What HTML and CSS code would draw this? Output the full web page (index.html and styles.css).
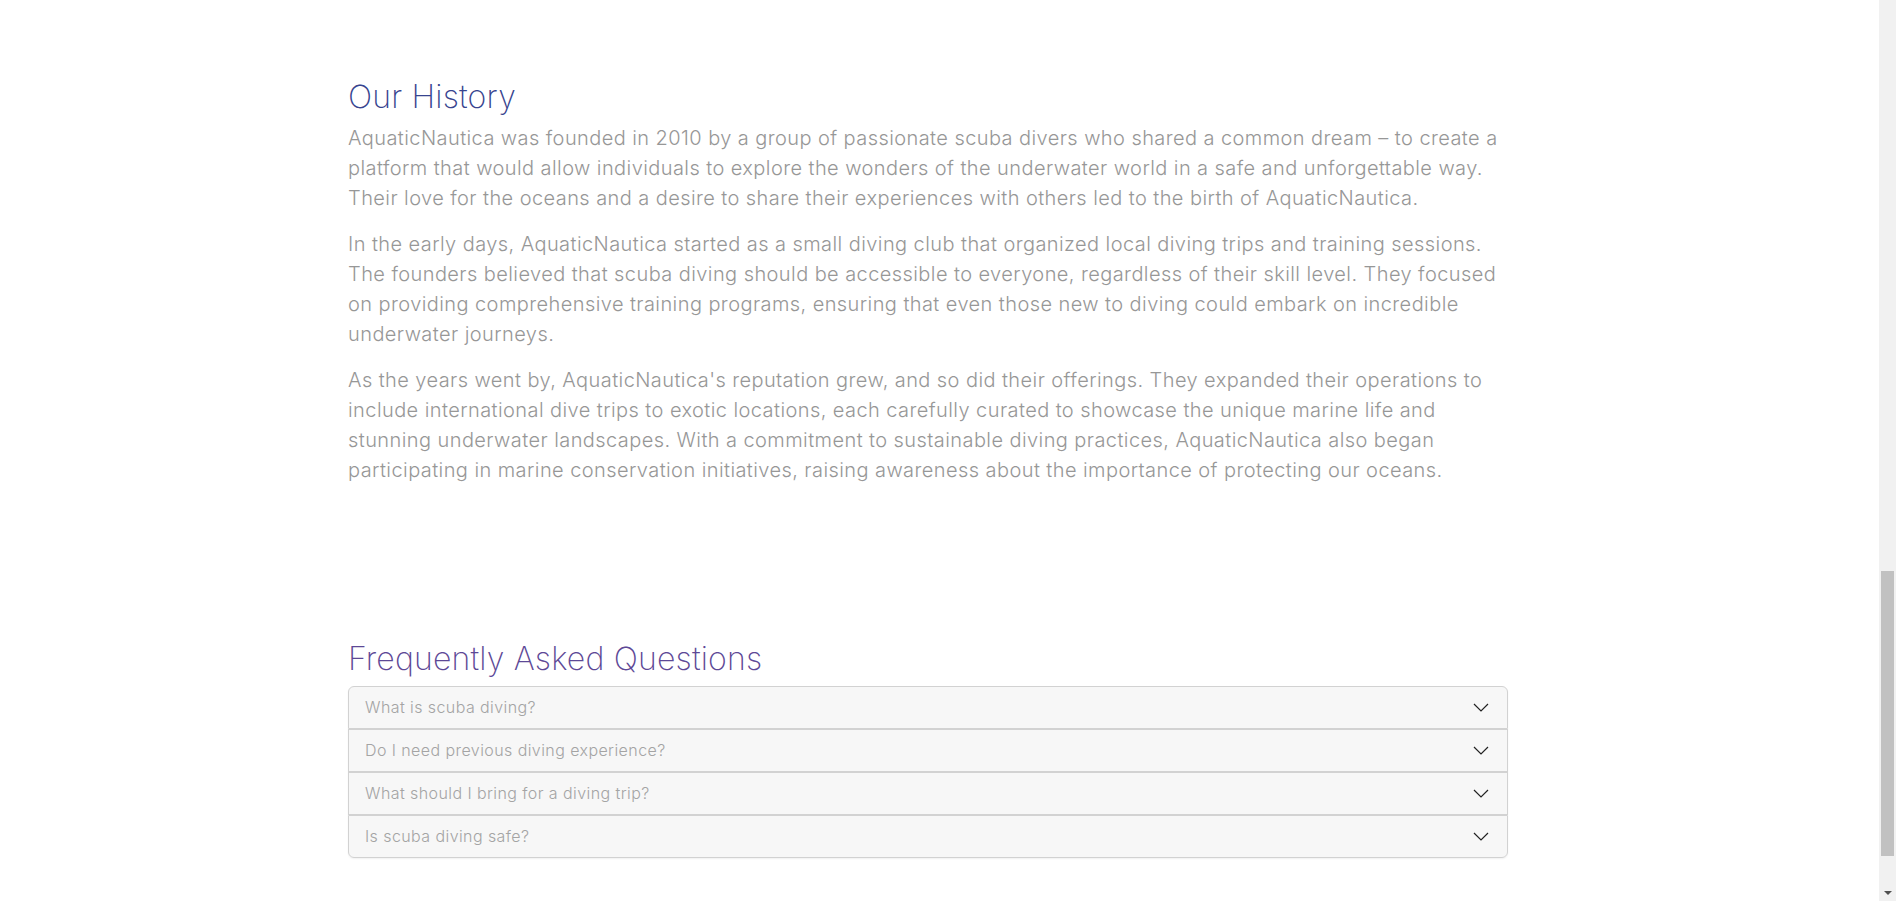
FILE: index.html
```html
<!DOCTYPE html>
<html lang="en">
<head>
<meta charset="utf-8">
<title>AquaticNautica – About</title>
<link rel="stylesheet" href="styles.css">
</head>
<body>
<div class="viewport">
  <main class="page">
    <section class="history">
      <h2 class="title title-history">Our History</h2>
      <p class="text">AquaticNautica was founded in 2010 by a group of passionate scuba divers who shared a common dream – to create a platform that would allow individuals to explore the wonders of the underwater world in a safe and unforgettable way. Their love for the oceans and a desire to share their experiences with others led to the birth of AquaticNautica.</p>
      <p class="text">In the early days, AquaticNautica started as a small diving club that organized local diving trips and training sessions. The founders believed that scuba diving should be accessible to everyone, regardless of their skill level. They focused on providing comprehensive training programs, ensuring that even those new to diving could embark on incredible underwater journeys.</p>
      <p class="text">As the years went by, AquaticNautica's reputation grew, and so did their offerings. They expanded their operations to include international dive trips to exotic locations, each carefully curated to showcase the unique marine life and stunning underwater landscapes. With a commitment to sustainable diving practices, AquaticNautica also began participating in marine conservation initiatives, raising awareness about the importance of protecting our oceans.</p>
    </section>
    <section class="faq">
      <h2 class="title title-faq">Frequently Asked Questions</h2>
      <div class="accordion">
        <div class="acc-item">
          <button class="acc-btn" type="button"><span>What is scuba diving?</span>
            <svg class="chev" width="16" height="9" viewBox="0 0 16 9"><polyline points="1,1 8,8 15,1" fill="none" stroke="#222" stroke-width="1.2"/></svg>
          </button>
        </div>
        <div class="acc-item">
          <button class="acc-btn" type="button"><span>Do I need previous diving experience?</span>
            <svg class="chev" width="16" height="9" viewBox="0 0 16 9"><polyline points="1,1 8,8 15,1" fill="none" stroke="#222" stroke-width="1.2"/></svg>
          </button>
        </div>
        <div class="acc-item">
          <button class="acc-btn" type="button"><span>What should I bring for a diving trip?</span>
            <svg class="chev" width="16" height="9" viewBox="0 0 16 9"><polyline points="1,1 8,8 15,1" fill="none" stroke="#222" stroke-width="1.2"/></svg>
          </button>
        </div>
        <div class="acc-item">
          <button class="acc-btn" type="button"><span>Is scuba diving safe?</span>
            <svg class="chev" width="16" height="9" viewBox="0 0 16 9"><polyline points="1,1 8,8 15,1" fill="none" stroke="#222" stroke-width="1.2"/></svg>
          </button>
        </div>
      </div>
    </section>
  </main>
</div>
<div class="scrollbar" aria-hidden="true">
  <div class="sb-button"></div>
  <div class="sb-thumb"></div>
  <div class="sb-button sb-down"><span class="sb-arrow"></span></div>
</div>
</body>
</html>
```

FILE: styles.css
```css
html, body { height: 100%; }
body {
  margin: 0;
  display: flex;
  height: 100vh;
  overflow: hidden;
  background: #fff;
  font-family: "Inter", "Open Sans", sans-serif;
  font-weight: 300;
  color: #979797;
}
.viewport {
  flex: 1;
  min-width: 0;
}
.page {
  width: 1160px;
  margin-left: 348px;
}
.history { padding-top: 78px; }
.faq { padding-top: 139px; }
.title {
  margin: 0 0 7px;
  font-size: 32px;
  line-height: 1.2;
  font-weight: 200;
  letter-spacing: 0.18px;
}
.title-history { color: #37448f; }
.title-faq { color: #5d4896; }
.text {
  margin: 0 0 16px;
  font-size: 20px;
  line-height: 30px;
  letter-spacing: 0.42px;
  color: #979797;
}
.accordion {
  border-radius: 6px;
  box-shadow: 0 1px 2px rgba(0,0,0,0.06);
}
.acc-item {
  border: 1px solid #d2d2d2;
  background: #f7f7f7;
}
.acc-item:first-child { border-radius: 6px 6px 0 0; }
.acc-item:last-child { border-radius: 0 0 6px 6px; }
.acc-btn {
  display: flex;
  align-items: center;
  justify-content: space-between;
  width: 100%;
  height: 41px;
  padding: 0 18px 0 16px;
  border: 0;
  background: transparent;
  font-family: "Inter", "Open Sans", sans-serif;
  font-weight: 300;
  font-size: 16px;
  letter-spacing: 0.42px;
  color: #a4a4a4;
  text-align: left;
  cursor: pointer;
}
.chev { flex: none; }

.scrollbar {
  flex: none;
  width: 17px;
  height: 100vh;
  background: #f1f1f1;
  display: flex;
  flex-direction: column;
}
.sb-button {
  flex: none;
  height: 17px;
  display: flex;
  align-items: center;
  justify-content: center;
}
.sb-thumb {
  flex: none;
  height: 285px;
  margin: 554px 2px 0;
  background: #c1c1c1;
}
.sb-down { margin-top: auto; }
.sb-arrow {
  width: 0;
  height: 0;
  border-left: 4px solid transparent;
  border-right: 4px solid transparent;
  border-top: 4px solid #505050;
}
```
